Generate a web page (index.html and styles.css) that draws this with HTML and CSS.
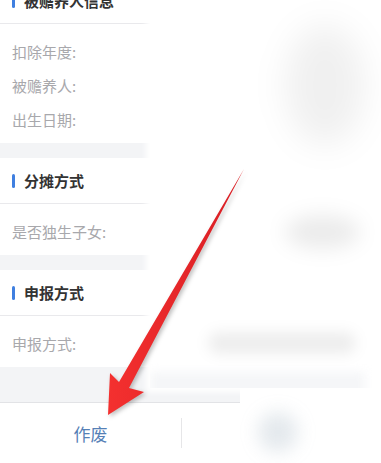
FILE: index.html
```html
<!DOCTYPE html>
<html lang="zh">
<head>
    <meta charset="UTF-8">
    <meta name="viewport" content="width=device-width, initial-scale=1.0">
    <title>赡养老人 - 详情</title>
    <link rel="stylesheet" href="styles.css">
</head>
<body>

<div class="content">
    <!-- 被赡养人信息 -->
    <section class="card">
        <div class="card-head"><span class="bar"></span>被赡养人信息</div>
        <ul class="fields">
            <li>扣除年度:</li>
            <li>被赡养人:</li>
            <li>出生日期:</li>
        </ul>
    </section>

    <!-- 分摊方式 -->
    <section class="card">
        <div class="card-head"><span class="bar"></span>分摊方式</div>
        <ul class="fields">
            <li>是否独生子女:</li>
        </ul>
    </section>

    <!-- 申报方式 -->
    <section class="card">
        <div class="card-head"><span class="bar"></span>申报方式</div>
        <ul class="fields">
            <li>申报方式:</li>
        </ul>
    </section>
</div>

<!-- 底部操作栏 -->
<div class="bottom-bar">
    <button class="action void-btn">作废</button>
    <span class="split"></span>
    <button class="action"></button>
</div>

<!-- 打码区域 -->
<div class="mask mask-top">
    <span class="blob blob-a"></span>
    <span class="blob blob-b"></span>
    <span class="blob blob-c"></span>
    <span class="blob blob-d"></span>
</div>
<div class="mask mask-bottom">
    <span class="blob blob-e"></span>
</div>

<!-- 标注箭头 -->
<svg class="arrow" width="381" height="463" viewBox="0 0 381 463">
    <defs>
        <linearGradient id="red" x1="0" y1="0" x2="1" y2="0">
            <stop offset="0" stop-color="#f4302f"/>
            <stop offset="1" stop-color="#d81e24"/>
        </linearGradient>
    </defs>
    <polygon fill="url(#red)" points="244,169 129,388 144,392 108,415 110,373 119,382"/>
</svg>

</body>
</html>
```

FILE: styles.css
```css
body {
    font-family: "Noto Sans CJK SC", "Noto Sans", sans-serif;
    background-color: #f3f4f6;
    margin: 0;
    height: 100vh;
    display: flex;
    flex-direction: column;
    overflow: hidden;
    position: relative;
}
.content {
    margin-top: -22px;
    flex: 1;
}
.card {
    background-color: #fff;
    margin-bottom: 15px;
}
.card-head {
    height: 45px;
    display: flex;
    align-items: center;
    padding-left: 12px;
    font-size: 15px;
    font-weight: bold;
    color: #333;
    border-bottom: 1px solid #e9e9ec;
}
.bar {
    width: 3px;
    height: 14px;
    border-radius: 2px;
    background-color: #3f7fe0;
    margin-right: 9px;
}
.fields {
    list-style: none;
    margin: 0;
    padding: 11px 0 6px 12px;
}
.fields li {
    height: 34px;
    line-height: 34px;
    font-size: 15px;
    color: #a8a8ac;
}
.bottom-bar {
    height: 60px;
    background-color: #fff;
    border-top: 1px solid #e2e3e6;
    display: flex;
    align-items: center;
}
.action {
    border: none;
    background: none;
    font-family: inherit;
    font-size: 17px;
    height: 100%;
    flex: 1;
}
.void-btn {
    flex: 0 0 181px;
    color: #5580b6;
}
.split {
    width: 1px;
    height: 30px;
    background-color: #e6e6e8;
}
.mask {
    position: absolute;
    background-color: #fff;
    overflow: hidden;
    box-shadow: 0 0 6px 4px #fff;
}
.mask-top {
    left: 150px;
    top: 0;
    width: 231px;
    height: 388px;
}
.mask-bottom {
    left: 240px;
    top: 388px;
    right: 0;
    bottom: 0;
    box-shadow: none;
}
.blob {
    position: absolute;
    border-radius: 50%;
}
.blob-a {
    left: 135px;
    top: 25px;
    width: 80px;
    height: 120px;
    background-color: rgba(0, 0, 0, 0.06);
    filter: blur(16px);
}
.blob-b {
    left: 135px;
    top: 215px;
    width: 75px;
    height: 34px;
    background-color: rgba(0, 0, 0, 0.08);
    filter: blur(10px);
}
.blob-c {
    left: 58px;
    top: 332px;
    width: 148px;
    height: 22px;
    border-radius: 11px;
    background-color: rgba(0, 0, 0, 0.07);
    filter: blur(7px);
}
.blob-d {
    left: 0;
    top: 372px;
    width: 215px;
    height: 30px;
    border-radius: 0;
    background-color: #f5f6f8;
    filter: blur(5px);
}
.blob-e {
    left: 18px;
    top: 24px;
    width: 40px;
    height: 40px;
    background-color: rgba(130, 155, 175, 0.22);
    filter: blur(9px);
}
.arrow {
    position: absolute;
    left: 0;
    top: 0;
    filter: drop-shadow(2px 2px 2px rgba(0, 0, 0, 0.25));
}
```
